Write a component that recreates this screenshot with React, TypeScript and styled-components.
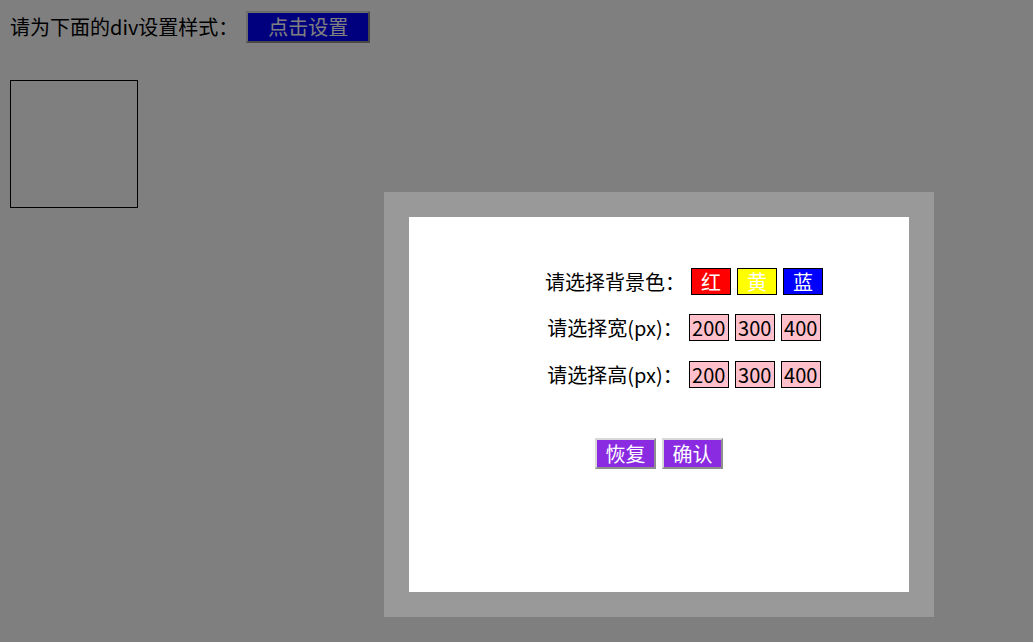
import styled, { createGlobalStyle } from 'styled-components'

const GlobalStyle = createGlobalStyle`
  html, body {
    margin: 0;
    padding: 0;
    background: #fff;
    font-family: "Noto Sans CJK SC", "Noto Sans", sans-serif;
  }
`

const colorOptions = [
  { label: '红', bg: '#ff0000' },
  { label: '黄', bg: '#ffff00' },
  { label: '蓝', bg: '#0000ff' },
]

const sizeOptions = ['200', '300', '400']

function App() {
  return (
    <>
      <GlobalStyle />
      <Page>
        <TopBar>
          <span>请为下面的div设置样式：</span>
          <ActionButton>点击设置</ActionButton>
        </TopBar>
        <TargetBox />
      </Page>
      <Mask />
      <Modal>
        <ModalBody>
          <OptionRow>
            <Label>请选择背景色：</Label>
            <Options>
              {colorOptions.map((c) => (
                <ColorButton key={c.label} bg={c.bg}>
                  {c.label}
                </ColorButton>
              ))}
            </Options>
          </OptionRow>
          <OptionRow>
            <Label>请选择宽(px)：</Label>
            <Options>
              {sizeOptions.map((s) => (
                <SizeButton key={s}>{s}</SizeButton>
              ))}
            </Options>
          </OptionRow>
          <OptionRow>
            <Label>请选择高(px)：</Label>
            <Options>
              {sizeOptions.map((s) => (
                <SizeButton key={s}>{s}</SizeButton>
              ))}
            </Options>
          </OptionRow>
          <Footer>
            <ActionButton small>恢复</ActionButton>
            <ActionButton small>确认</ActionButton>
          </Footer>
        </ModalBody>
      </Modal>
    </>
  )
}

export default App

const Page = styled.div`
  padding: 11px 10px;
  font-size: 20px;
  color: #000;
`

const TopBar = styled.div`
  display: flex;
  align-items: center;
  gap: 8px;
  height: 32px;
  line-height: 32px;
`

const ActionButton = styled.button<{ small?: boolean }>`
  box-sizing: border-box;
  font-family: inherit;
  font-size: 20px;
  color: #fff;
  background: ${({ small }) => (small ? '#8a2be2' : '#0000ff')};
  border: 2px solid;
  border-color: #d8d8d8 #8e8e8e #8e8e8e #d8d8d8;
  padding: 0;
  width: ${({ small }) => (small ? '61px' : '124px')};
  height: ${({ small }) => (small ? '31px' : '32px')};
  line-height: ${({ small }) => (small ? '27px' : '28px')};
  text-align: center;
  cursor: pointer;
`

const TargetBox = styled.div`
  box-sizing: border-box;
  width: 128px;
  height: 128px;
  margin-top: 37px;
  border: 1px solid #000;
`

const Mask = styled.div`
  position: fixed;
  inset: 0;
  background: rgba(0, 0, 0, 0.5);
  z-index: 10;
`

const Modal = styled.div`
  position: fixed;
  top: 192px;
  left: 384px;
  width: 500px;
  height: 375px;
  border: 25px solid #999;
  background: #fff;
  z-index: 11;
  font-size: 20px;
  color: #000;
`

const ModalBody = styled.div`
  display: flex;
  flex-direction: column;
  padding-top: 41px;
`

const OptionRow = styled.div`
  display: flex;
  justify-content: center;
  align-items: center;
  height: 46.5px;
  padding-left: 50px;
`

const Label = styled.span`
  line-height: 27px;
  white-space: nowrap;
`

const Options = styled.div`
  display: flex;
  gap: 6px;
  margin-left: 6px;
`

const OptionBase = styled.button`
  box-sizing: border-box;
  width: 40px;
  height: 27px;
  padding: 0;
  border: 1px solid #000;
  font-family: inherit;
  font-size: 20px;
  line-height: 25px;
  text-align: center;
  cursor: pointer;
`

const ColorButton = styled(OptionBase)<{ bg: string }>`
  background: ${({ bg }) => bg};
  color: #fff;
`

const SizeButton = styled(OptionBase)`
  background: #ffc0cb;
  color: #000;
`

const Footer = styled.div`
  display: flex;
  justify-content: center;
  gap: 6px;
  margin-top: 40px;
`
